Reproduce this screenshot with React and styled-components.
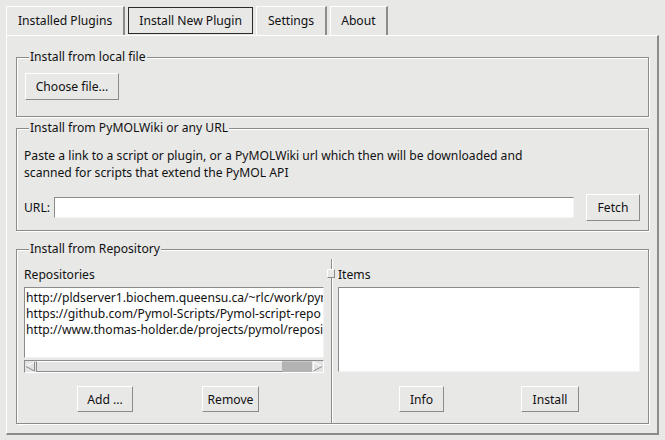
import React from "react";
import styled, { createGlobalStyle } from "styled-components";

const BG = "#e8e8e7";
const DARK = "#8b8b8b";

const Global = createGlobalStyle`
  html, body { margin: 0; padding: 0; background: ${BG}; }
  body { font-family: "Noto Sans", "DejaVu Sans", sans-serif; font-size: 12.15px; color: #111; }
`;

const Window = styled.div`
  width: 665px;
  height: 440px;
  box-sizing: border-box;
  padding: 6px 6px 0 6px;
  background: ${BG};
`;

const TabBar = styled.div`
  display: flex;
  align-items: flex-end;
  height: 29px;
  gap: 3px;
`;

const Tab = styled.div`
  box-sizing: border-box;
  height: ${(p) => (p.$selected ? "27px" : "29px")};
  margin-bottom: ${(p) => (p.$selected ? "1px" : "0")};
  padding: 0 ${(p) => p.$pad || 11}px;
  display: flex;
  align-items: center;
  line-height: 16px;
  border-left: 1px solid ${(p) => (p.$selected ? "#2a2a2a" : "#fff")};
  border-top: 1px solid ${(p) => (p.$selected ? "#2a2a2a" : "#fff")};
  border-right: ${(p) => (p.$selected ? "1px solid #2a2a2a" : `2px solid ${DARK}`)};
  border-bottom: ${(p) => (p.$selected ? "1px solid #2a2a2a" : "none")};
  background: ${BG};
`;

const Pane = styled.div`
  box-sizing: border-box;
  width: 653px;
  height: 400px;
  border-top: 1px solid #fff;
  border-left: 1px solid #fff;
  border-right: 2px solid ${DARK};
  border-bottom: 2px solid ${DARK};
  padding: 21px 8px 0 9px;
  display: flex;
  flex-direction: column;
`;

const GroupBox = styled.div`
  position: relative;
  box-sizing: border-box;
  border: 1px solid ${DARK};
  box-shadow: inset 1px 1px 0 #fff, 1px 1px 0 #fff;
  margin-top: ${(p) => p.$mt || 0}px;
  padding: ${(p) => p.$pad};
  height: ${(p) => p.$h}px;
`;

const GroupTitle = styled.span`
  position: absolute;
  top: -9px;
  left: 12px;
  padding: 0 1px;
  line-height: 16px;
  background: ${BG};
`;

const Group = ({ title, children, ...rest }) => (
  <GroupBox {...rest}>
    <GroupTitle>{title}</GroupTitle>
    {children}
  </GroupBox>
);

const Button = styled.button`
  box-sizing: border-box;
  height: ${(p) => p.$h || 27}px;
  width: ${(p) => p.$w}px;
  margin-left: ${(p) => p.$ml || 0}px;
  padding: 0;
  font: inherit;
  color: #111;
  background: ${BG};
  border-top: 1px solid #fff;
  border-left: 1px solid #fff;
  border-right: 1px solid ${DARK};
  border-bottom: 1px solid ${DARK};
  border-radius: 0;
  flex: none;
`;

const Description = styled.p`
  margin: 0;
  line-height: 17px;
`;

const UrlRow = styled.div`
  display: flex;
  align-items: center;
  margin-top: 13px;
`;

const UrlLabel = styled.span`
  line-height: 16px;
  width: 30px;
`;

const UrlInput = styled.input`
  box-sizing: border-box;
  width: 521px;
  height: 21px;
  margin: 0;
  border-top: 1px solid ${DARK};
  border-left: 1px solid ${DARK};
  border-right: 1px solid #f4f4f4;
  border-bottom: 1px solid #f4f4f4;
  background: #fff;
  outline: none;
  padding: 0 2px;
  font: inherit;
`;

const Paned = styled.div`
  display: flex;
  height: 164px;
`;

const SidePane = styled.div`
  display: flex;
  flex-direction: column;
  width: ${(p) => p.$w}px;
  padding-top: 8px;
`;

const ListLabel = styled.div`
  line-height: 16px;
  height: 16px;
  margin-bottom: 4px;
`;

const ListBox = styled.div`
  box-sizing: border-box;
  height: ${(p) => p.$h}px;
  background: #fff;
  border-top: 1px solid ${DARK};
  border-left: 1px solid ${DARK};
  border-right: 1px solid #f2f2f2;
  border-bottom: 1px solid #f2f2f2;
  padding-top: 2px;
  overflow: hidden;
  white-space: nowrap;
`;

const ListItem = styled.div`
  line-height: 16px;
  padding-left: 1px;
`;

const ScrollBar = styled.div`
  box-sizing: border-box;
  display: flex;
  height: 13px;
  margin-top: 2px;
  border: 1px solid ${DARK};
  border-right-color: #fff;
  border-bottom-color: #fff;
  background: #e3e3e3;
`;

const Arrow = styled.div`
  width: 11px;
  height: 11px;
  flex: none;
  display: flex;
  align-items: center;
  justify-content: center;
`;

const Track = styled.div`
  flex: 1;
  border-left: 1px solid ${DARK};
  border-bottom: 1px solid ${DARK};
  border-top: 1px solid #fff;
  box-sizing: border-box;
`;

const Thumb = styled.div`
  width: 30px;
  flex: none;
  background: #b3b3b3;
  border-top: 1px solid #c8c8c8;
  box-sizing: border-box;
`;

const ButtonRow = styled.div`
  display: flex;
  gap: ${(p) => p.$gap}px;
  padding-left: ${(p) => p.$left}px;
  margin-top: ${(p) => p.$mt}px;
`;

const Sash = styled.div`
  position: relative;
  width: 14px;
  flex: none;
  display: flex;
  justify-content: center;
`;

const SashLine = styled.div`
  width: 1px;
  height: 100%;
  background: ${DARK};
  box-shadow: 1px 0 0 #fff;
`;

const SashHandle = styled.div`
  position: absolute;
  left: 3px;
  top: 10px;
  width: 6px;
  height: 7px;
  background: ${BG};
  border-top: 1px solid #fff;
  border-left: 1px solid #fff;
  border-right: 1px solid ${DARK};
  border-bottom: 1px solid ${DARK};
`;

const ArrowIcon = ({ dir }) => (
  <svg width="11" height="11" viewBox="0 0 11 11">
    {dir === "left" ? (
      <>
        <polygon points="9.5,1 1,5.5 9.5,10" fill="#e3e3e3" />
        <polyline points="9.5,1 1,5.5" stroke="#fff" fill="none" />
        <polyline points="1,5.5 9.5,10 9.5,1" stroke={DARK} fill="none" />
      </>
    ) : (
      <>
        <polygon points="1.5,1 10,5.5 1.5,10" fill="#e3e3e3" />
        <polyline points="1.5,10 1.5,1 10,5.5" stroke="#fff" fill="none" />
        <polyline points="10,5.5 1.5,10" stroke={DARK} fill="none" />
      </>
    )}
  </svg>
);

const repos = [
  "http://pldserver1.biochem.queensu.ca/~rlc/work/pymol/",
  "https://github.com/Pymol-Scripts/Pymol-script-repo",
  "http://www.thomas-holder.de/projects/pymol/repository/",
];

export default function App() {
  return (
    <>
      <Global />
      <Window>
        <TabBar>
          <Tab>Installed Plugins</Tab>
          <Tab $selected $pad={10}>Install New Plugin</Tab>
          <Tab>Settings</Tab>
          <Tab $pad={10}>About</Tab>
        </TabBar>
        <Pane>
          <Group title="Install from local file" $h={60} $pad="15px 8px 0 8px">
            <Button $w={94}>Choose file...</Button>
          </Group>
          <Group title="Install from PyMOLWiki or any URL" $mt={11} $h={103} $pad="18px 8px 0 7px">
            <Description>
              Paste a link to a script or plugin, or a PyMOLWiki url which then will be downloaded and
              <br />
              scanned for scripts that extend the PyMOL API
            </Description>
            <UrlRow>
              <UrlLabel>URL:</UrlLabel>
              <UrlInput />
              <Button $w={54} $ml={12}>Fetch</Button>
            </UrlRow>
          </Group>
          <Group title="Install from Repository" $mt={18} $h={175} $pad="9px 7px 0 7px">
            <Paned>
              <SidePane $w={300}>
                <ListLabel>Repositories</ListLabel>
                <ListBox $h={71}>
                  {repos.map((r) => (
                    <ListItem key={r}>{r}</ListItem>
                  ))}
                </ListBox>
                <ScrollBar>
                  <Arrow><ArrowIcon dir="left" /></Arrow>
                  <Track />
                  <Thumb />
                  <Arrow><ArrowIcon dir="right" /></Arrow>
                </ScrollBar>
                <ButtonRow $left={53} $gap={69} $mt={13}>
                  <Button $w={56} $h={26}>Add ...</Button>
                  <Button $w={57} $h={26}>Remove</Button>
                </ButtonRow>
              </SidePane>
              <Sash>
                <SashLine />
                <SashHandle />
              </Sash>
              <SidePane $w={302}>
                <ListLabel>Items</ListLabel>
                <ListBox $h={85} />
                <ButtonRow $left={61} $gap={77} $mt={14}>
                  <Button $w={45} $h={26}>Info</Button>
                  <Button $w={58} $h={26}>Install</Button>
                </ButtonRow>
              </SidePane>
            </Paned>
          </Group>
        </Pane>
      </Window>
    </>
  );
}
